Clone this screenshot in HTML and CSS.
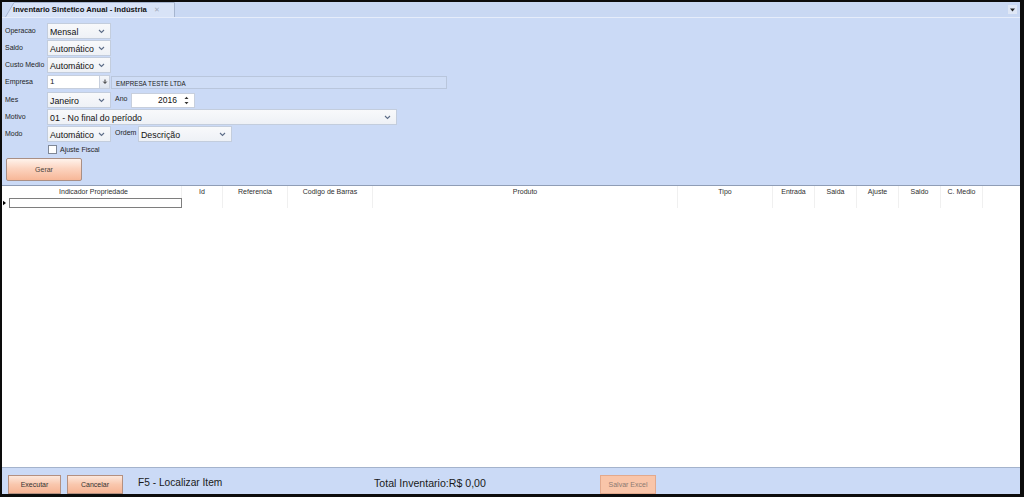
FILE: index.html
```html
<!DOCTYPE html>
<html lang="pt">
<head>
<meta charset="utf-8">
<title>Inventario Sintetico Anual - Indústria</title>
<link rel="stylesheet" href="styles.css">
</head>
<body>
<div class="window">
  <div class="tabstrip">
    <div class="tab">
      <svg class="tab-shape" width="170" height="15" viewBox="0 0 170 15"><path d="M0.5 15 L9 0.5 L169.5 0.5 L169.5 15" fill="#d8e3f7" stroke="#a6b5cf" stroke-width="1"/></svg>
      <span class="tab-title">Inventario Sintetico Anual - Indústria</span>
      <span class="tab-close">✕</span>
    </div>
    <div class="tab-menu"><svg width="7" height="7" viewBox="0 0 7 7"><path d="M1 2.5 L6 2.5 L3.5 5.5 Z" fill="#222"/></svg></div>
  </div>

  <div class="form">
    <div class="row r1">
      <span class="label">Operacao</span>
      <div class="select w64"><span>Mensal</span><svg class="chev" width="7" height="5" viewBox="0 0 7 5"><path d="M1 1 L3.5 3.5 L6 1" fill="none" stroke="#5d6d88" stroke-width="1.1"/></svg></div>
    </div>
    <div class="row r2">
      <span class="label">Saldo</span>
      <div class="select w64"><span>Automático</span><svg class="chev" width="7" height="5" viewBox="0 0 7 5"><path d="M1 1 L3.5 3.5 L6 1" fill="none" stroke="#5d6d88" stroke-width="1.1"/></svg></div>
    </div>
    <div class="row r3">
      <span class="label">Custo Medio</span>
      <div class="select w64"><span>Automático</span><svg class="chev" width="7" height="5" viewBox="0 0 7 5"><path d="M1 1 L3.5 3.5 L6 1" fill="none" stroke="#5d6d88" stroke-width="1.1"/></svg></div>
    </div>
    <div class="row r4">
      <span class="label">Empresa</span>
      <div class="textbox emp-code">1</div>
      <div class="lookup"><svg width="6" height="6" viewBox="0 0 6 6"><path d="M3 0.5 L3 4 M1.3 2.6 L3 4.5 L4.7 2.6" fill="none" stroke="#333" stroke-width="1"/></svg></div>
      <div class="emp-desc">EMPRESA TESTE LTDA</div>
    </div>
    <div class="row r5">
      <span class="label">Mes</span>
      <div class="select w64"><span>Janeiro</span><svg class="chev" width="7" height="5" viewBox="0 0 7 5"><path d="M1 1 L3.5 3.5 L6 1" fill="none" stroke="#5d6d88" stroke-width="1.1"/></svg></div>
      <span class="label-inline ano">Ano</span>
      <div class="spin"><span>2016</span><svg class="spin-arrows" width="5" height="9" viewBox="0 0 5 9"><path d="M0.5 3 L2.5 0.8 L4.5 3 Z M0.5 6 L2.5 8.2 L4.5 6 Z" fill="#333"/></svg></div>
    </div>
    <div class="row r6">
      <span class="label">Motivo</span>
      <div class="select w350"><span>01 - No final do período</span><svg class="chev" width="7" height="5" viewBox="0 0 7 5"><path d="M1 1 L3.5 3.5 L6 1" fill="none" stroke="#5d6d88" stroke-width="1.1"/></svg></div>
    </div>
    <div class="row r7">
      <span class="label">Modo</span>
      <div class="select w64"><span>Automático</span><svg class="chev" width="7" height="5" viewBox="0 0 7 5"><path d="M1 1 L3.5 3.5 L6 1" fill="none" stroke="#5d6d88" stroke-width="1.1"/></svg></div>
      <span class="label-inline ordem">Ordem</span>
      <div class="select w94"><span>Descrição</span><svg class="chev" width="7" height="5" viewBox="0 0 7 5"><path d="M1 1 L3.5 3.5 L6 1" fill="none" stroke="#5d6d88" stroke-width="1.1"/></svg></div>
    </div>
    <div class="row r8">
      <span class="check"></span>
      <span class="check-label">Ajuste Fiscal</span>
    </div>
    <div class="row r9">
      <div class="btn btn-gerar">Gerar</div>
    </div>
  </div>

  <div class="grid">
    <div class="grid-head">
      <div class="cell c-ind"></div>
      <div class="cell c-prop">Indicador Propriedade</div>
      <div class="cell c-id">Id</div>
      <div class="cell c-ref">Referencia</div>
      <div class="cell c-cod">Codigo de Barras</div>
      <div class="cell c-prod">Produto</div>
      <div class="cell c-tipo">Tipo</div>
      <div class="cell c-num">Entrada</div>
      <div class="cell c-num">Saida</div>
      <div class="cell c-num">Ajuste</div>
      <div class="cell c-num">Saldo</div>
      <div class="cell c-num">C. Medio</div>
    </div>
    <div class="grid-row">
      <div class="cell c-ind"><svg width="4" height="6" viewBox="0 0 4 6"><path d="M0 0 L4 3 L0 6 Z" fill="#000"/></svg></div>
      <div class="cell c-prop"><div class="edit-box"></div></div>
      <div class="cell c-id"></div>
      <div class="cell c-ref"></div>
      <div class="cell c-cod"></div>
      <div class="cell c-prod"></div>
      <div class="cell c-tipo"></div>
      <div class="cell c-num"></div>
      <div class="cell c-num"></div>
      <div class="cell c-num"></div>
      <div class="cell c-num"></div>
      <div class="cell c-num"></div>
    </div>
  </div>

  <div class="footer">
    <div class="btn btn-exec">Executar</div>
    <div class="btn btn-cancel">Cancelar</div>
    <span class="f5">F5 - Localizar Item</span>
    <span class="total">Total Inventario:R$ 0,00</span>
    <div class="btn btn-excel">Salvar Excel</div>
  </div>
</div>
</body>
</html>
```

FILE: styles.css
```css
* { box-sizing: border-box; }
html, body { margin: 0; padding: 0; }
body {
  width: 1024px;
  height: 497px;
  overflow: hidden;
  background: #000;
  font-family: "Liberation Sans", Arial, sans-serif;
  color: #1b1b1b;
}
.window {
  width: 1024px;
  height: 497px;
  border-style: solid;
  border-color: #0c0c0c;
  border-width: 2px 4px 3px 2px;
  display: flex;
  flex-direction: column;
  background: #cbdaf6;
}

/* tab strip */
.tabstrip {
  flex: none;
  height: 16px;
  display: flex;
  align-items: flex-end;
  background: #c9d8f3;
  border-bottom: 1px solid #e6edfb;
  padding-left: 3px;
}
.tab {
  position: relative;
  width: 170px;
  height: 15px;
  display: flex;
  align-items: center;
  padding-left: 8px;
}
.tab-shape { position: absolute; left: 0; top: 0; }
.tab-title {
  position: relative;
  font-weight: bold;
  font-size: 7.7px;
  color: #111;
}
.tab-close {
  position: relative;
  margin-left: 7px;
  color: #a3abbb;
  font-size: 7px;
}
.tab-menu {
  margin-left: auto;
  margin-right: 3px;
  align-self: center;
  width: 9px;
  height: 9px;
  display: flex;
  align-items: center;
  justify-content: center;
  background: #dfe7f6;
}

/* form */
.form {
  flex: none;
  height: 167px;
  padding: 5px 0 0 3px;
}
.row { display: flex; align-items: center; }
.r1 { height: 16px; }
.r2 { height: 16px; margin-top: 1px; }
.r3 { height: 16px; margin-top: 1px; }
.r4 { height: 14px; margin-top: 2px; }
.r5 { height: 16px; margin-top: 3px; }
.r6 { height: 16px; margin-top: 1px; }
.r7 { height: 16px; margin-top: 1px; }
.r8 { height: 9px; margin-top: 3px; padding-left: 43px; }
.r9 { height: 23px; margin-top: 4px; padding-left: 1px; }

.label {
  width: 42px;
  flex: none;
  font-size: 7px;
  color: #1e1e1e;
  align-self: flex-start;
  padding-top: 3.5px;
}
.r4 .label { padding-top: 2.5px; }
.label-inline {
  font-size: 7px;
  color: #1e1e1e;
  align-self: flex-start;
  padding-top: 2.5px;
}
.ano { margin-left: 4px; width: 16px; }
.ordem { margin-left: 4px; width: 23px; }

.select {
  height: 16px;
  display: flex;
  align-items: center;
  justify-content: space-between;
  padding: 0 5px 0 2px;
  background: linear-gradient(#f8f9fb, #eef1f6);
  border: 1px solid #c3cddd;
  font-size: 8.8px;
  color: #111;
}
.select span { padding-top: 1px; }
.chev { flex: none; }
.w64 { width: 64px; }
.w94 { width: 94px; }
.w350 { width: 350px; }

.textbox {
  height: 14px;
  background: #fff;
  border: 1px solid #c7cfdd;
  font-size: 8px;
  padding: 1px 2px;
}
.emp-code { width: 53px; }
.lookup {
  width: 10px;
  height: 14px;
  display: flex;
  align-items: center;
  justify-content: center;
  background: linear-gradient(#f4f6fa, #dfe5ef);
  border: 1px solid #c7cfdd;
  border-left: none;
}
.emp-desc {
  width: 336px;
  height: 13px;
  margin-left: 1px;
  border: 1px solid #b9c6dc;
  background: #cfddf6;
  font-size: 6.3px;
  color: #222;
  padding: 3px 0 0 4px;
}

.spin {
  width: 64px;
  height: 15px;
  background: #fff;
  border: 1px solid #c7cfdd;
  display: flex;
  align-items: center;
  justify-content: flex-end;
  padding-right: 5px;
  font-size: 8.5px;
  color: #111;
}
.spin span { margin-right: 7px; }

.check {
  width: 9px;
  height: 9px;
  background: #fff;
  border: 1px solid #7f8796;
  flex: none;
}
.check-label {
  margin-left: 3px;
  font-size: 7px;
  color: #1e1e1e;
}

/* buttons */
.btn {
  display: flex;
  align-items: center;
  justify-content: center;
  font-size: 7px;
  color: #333;
  flex: none;
}
.btn-gerar {
  width: 76px;
  height: 23px;
  border: 1px solid #a98f85;
  border-radius: 2px;
  background: linear-gradient(#fff3ec 0%, #fcd4c0 45%, #f7b797 100%);
  color: #4a4440;
}
.btn-exec, .btn-cancel {
  height: 19px;
  border: 1px solid #b49080;
  background: linear-gradient(#fde8dc 0%, #f9c7ad 50%, #f6b494 100%);
}
.btn-exec { width: 53px; }
.btn-cancel { width: 56px; margin-left: 6px; }
.btn-excel {
  width: 56px;
  height: 19px;
  border: 1px solid #e2a98d;
  background: #f9c5a9;
  color: #8c7a72;
}

/* grid */
.grid {
  flex: none;
  height: 282px;
  background: #fff;
  border-top: 1px solid #8f9db6;
}
.grid-head, .grid-row { display: flex; }
.grid-head { height: 12px; }
.grid-row { height: 10px; }
.cell {
  flex: none;
  height: 100%;
  border-right: 1px solid #f0f0f0;
  font-size: 7px;
  color: #2e2e2e;
  text-align: center;
  padding-top: 2px;
}
.grid-row .cell { padding-top: 0; }
.c-ind { width: 4px; border-right: none; }
.grid-row .c-ind { display: flex; align-items: center; padding-left: 1px; }
.c-prop { width: 176px; }
.c-id { width: 41px; }
.c-ref { width: 65px; }
.c-cod { width: 85px; }
.c-prod { width: 305px; }
.c-tipo { width: 95px; }
.c-num { width: 42px; }
.edit-box {
  margin-left: 3px;
  width: 173px;
  height: 10px;
  border: 1px solid #7e7e7e;
  background: #fff;
}
.grid-row .c-prop { border-right: none; }

/* footer */
.footer {
  flex: 1;
  display: flex;
  align-items: flex-end;
  padding-left: 6px;
  border-top: 1px solid #a4b3cc;
  background: #cbdaf6;
}
.f5 {
  align-self: center;
  padding-top: 3px;
  margin-left: 15px;
  width: 236px;
  font-size: 10.2px;
  color: #1a1a1a;
}
.total {
  align-self: center;
  padding-top: 3px;
  width: 226px;
  font-size: 10.6px;
  color: #1a1a1a;
}
```
